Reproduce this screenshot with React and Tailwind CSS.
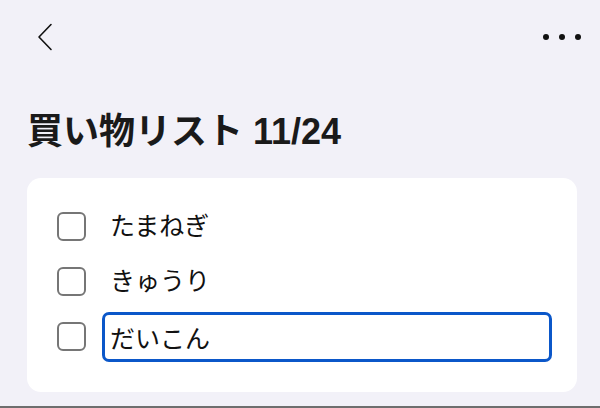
import { useState } from 'react';

const font = { fontFamily: '"Liberation Sans", "Noto Sans CJK JP", sans-serif' };

const items = [
  { id: 1, name: 'たまねぎ' },
  { id: 2, name: 'きゅうり' },
];

function Checkbox() {
  return <span className="block w-[29px] h-[29px] shrink-0 rounded-[6px] border-2 border-[#767676] bg-white" />;
}

export default function App() {
  const [draft, setDraft] = useState('だいこん');

  return (
    <div
      className="w-[600px] h-[408px] overflow-hidden bg-[#f2f1f8] border-b-2 border-[#6e6e6e] text-[#111]"
      style={font}
    >
      {/* header */}
      <div className="h-[74px] flex items-center justify-between pl-[37px] pr-[19px]">
        <svg width="16" height="28" viewBox="0 0 16 28" fill="none">
          <path d="M14 1.5 L2 14 L14 26.5" stroke="#111" strokeWidth="1.6" strokeLinecap="round" strokeLinejoin="round" />
        </svg>
        <div className="flex items-center gap-[10px]">
          <span className="w-[6px] h-[6px] rounded-full bg-[#111]" />
          <span className="w-[6px] h-[6px] rounded-full bg-[#111]" />
          <span className="w-[6px] h-[6px] rounded-full bg-[#111]" />
        </div>
      </div>

      <h1 className="mt-[37px] pl-[27px] text-[36px] leading-[42px] font-bold text-[#1a1a1a]">
        買い物リスト 11/24
      </h1>

      <div className="mt-[25px] ml-[27px] mr-[23px] h-[214px] rounded-[14px] bg-white pt-[21px] pl-[30px] pr-[25px]">
        {items.map((it) => (
          <div key={it.id} className="h-[55px] flex items-center gap-[16px]">
            <Checkbox />
            <div className="flex-1 h-[50px] flex items-center px-[8px] text-[25px]">{it.name}</div>
          </div>
        ))}
        <div className="h-[55px] flex items-center gap-[16px]">
          <Checkbox />
          <input
            value={draft}
            onChange={(e) => setDraft(e.target.value)}
            className="flex-1 h-[50px] rounded-[7px] border-[3px] border-[#0b57c9] px-[5px] text-[25px] text-[#111] outline-none bg-white"
            style={font}
          />
        </div>
      </div>
    </div>
  );
}
